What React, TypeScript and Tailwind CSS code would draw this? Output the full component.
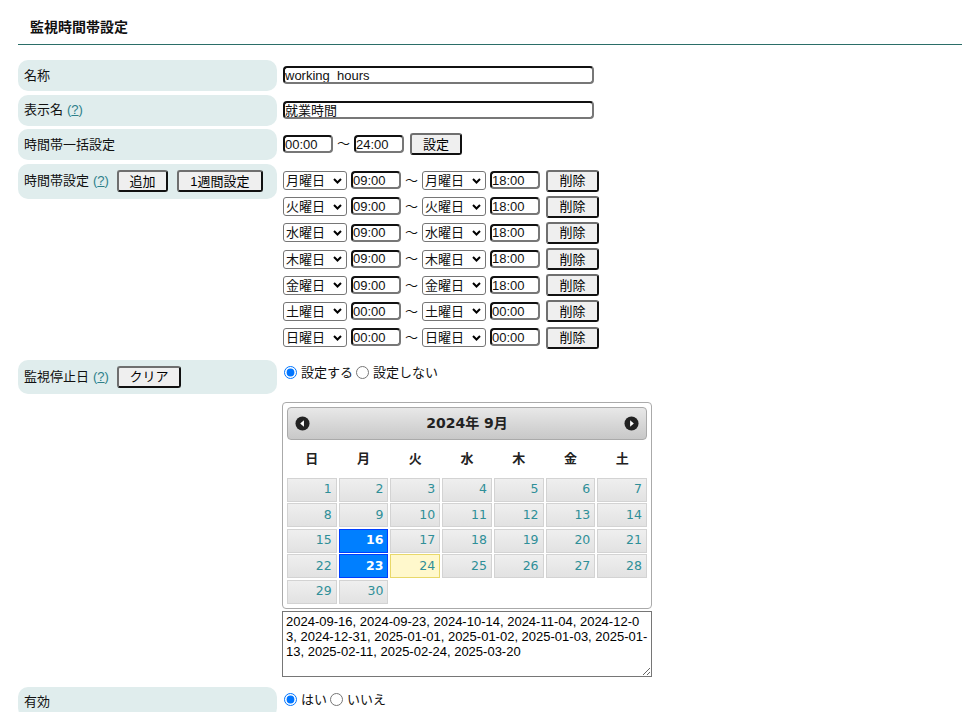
import React from 'react';

const FONT = "font-['Liberation_Sans','Noto_Sans_CJK_JP',sans-serif]";

const ranges = [
  { d: '月', from: '09:00', to: '18:00' },
  { d: '火', from: '09:00', to: '18:00' },
  { d: '水', from: '09:00', to: '18:00' },
  { d: '木', from: '09:00', to: '18:00' },
  { d: '金', from: '09:00', to: '18:00' },
  { d: '土', from: '00:00', to: '00:00' },
  { d: '日', from: '00:00', to: '00:00' },
];
const selectedDates = [16, 23];
const today = 24;
const stopDays =
  '2024-09-16, 2024-09-23, 2024-10-14, 2024-11-04, 2024-12-03, 2024-12-31, 2025-01-01, 2025-01-02, 2025-01-03, 2025-01-13, 2025-02-11, 2025-02-24, 2025-03-20';

const Help = () => (
  <span className="text-[#2d7f8a] ml-[4px]">
    (<span className="underline">?</span>)
  </span>
);

const Btn = ({ children, w }: { children: React.ReactNode; w: string }) => (
  <button
    className={`${w} h-[22px] shrink-0 bg-[#efefef] border-2 border-t-[#6f6f6f] border-l-[#6f6f6f] border-b-[#111] border-r-[#111] rounded-[3px] text-[13px] leading-none text-black flex items-center justify-center`}
  >
    {children}
  </button>
);

const TimeInput = ({ v }: { v: string }) => (
  <input
    readOnly
    value={v}
    className="w-[50px] h-[18px] shrink-0 border-2 border-t-[#111] border-l-[#111] border-r-[#777] border-b-[#777] rounded-[4px] px-0 text-[13px] leading-none bg-white outline-none"
  />
);

const DaySelect = ({ d }: { d: string }) => (
  <div className="w-[64px] h-[19px] shrink-0 border border-[#767676] rounded-[3px] bg-white flex items-center justify-between pl-[2px] pr-[4px] text-[13px] leading-none">
    <span>{d}曜日</span>
    <svg width="9" height="6" viewBox="0 0 9 6">
      <path d="M1 1l3.5 3.5L8 1" stroke="#000" strokeWidth="2" fill="none" />
    </svg>
  </div>
);

const Label = ({ children, h }: { children: React.ReactNode; h: string }) => (
  <div className={`w-[259px] shrink-0 ${h} bg-[#e0eded] rounded-[10px] pl-[6px] flex items-center text-[13px] text-[#111]`}>
    {children}
  </div>
);

const Radio = ({ checked, name, label }: { checked?: boolean; name: string; label: string }) => (
  <label className="flex items-center">
    <input type="radio" name={name} defaultChecked={checked} className="w-[13px] h-[13px] m-0 ml-[1px] mr-[4px]" />
    <span className="mr-[2px]">{label}</span>
  </label>
);

const CircleArrow = ({ dir }: { dir: 'l' | 'r' }) => (
  <svg width="15" height="15" viewBox="0 0 16 16">
    <circle cx="8" cy="8" r="7.5" fill="#222" />
    {dir === 'l' ? <path d="M9.5 4.5v7L5.5 8z" fill="#fff" /> : <path d="M6.5 4.5v7l4-3.5z" fill="#fff" />}
  </svg>
);

const Calendar = () => {
  const cells = Array.from({ length: 30 }, (_, i) => i + 1);
  return (
    <div className="w-[370px] border border-[#aaa] rounded-[4px] p-[4px] bg-white">
      <div className="h-[33px] border border-[#aaa] rounded-[4px] bg-gradient-to-b from-[#e8e8e8] to-[#c8c8c8] flex items-center justify-between px-[7px]">
        <CircleArrow dir="l" />
        <span className="font-['DejaVu_Sans','Noto_Sans_CJK_JP',sans-serif] font-bold text-[14px] text-[#222]">2024年 9月</span>
        <CircleArrow dir="r" />
      </div>
      <div className="grid grid-cols-7 gap-x-[2px] h-[38px] items-center">
        {['日', '月', '火', '水', '木', '金', '土'].map((d) => (
          <div key={d} className="text-center font-bold text-[13px] text-[#222]">{d}</div>
        ))}
      </div>
      <div className="grid grid-cols-7 gap-x-[2px] gap-y-[1.5px]">
        {cells.map((n) => {
          const sel = selectedDates.includes(n);
          const isToday = n === today;
          const cls = sel
            ? 'bg-[#007fff] border-[#003eff] text-white font-bold'
            : isToday
            ? 'bg-[#fff8cc] border-[#e8d86a] text-[#2f8f98]'
            : 'bg-gradient-to-b from-[#efefef] to-[#e2e2e2] border-[#d3d3d3] text-[#2f8f98]';
          return (
            <div
              key={n}
              className={`h-[24px] border ${cls} flex items-center justify-end pr-[4px] font-['DejaVu_Sans',sans-serif] text-[12.5px]`}
            >
              {n}
            </div>
          );
        })}
      </div>
    </div>
  );
};

export default function App() {
  return (
    <div className={`min-h-screen bg-white text-[#111] ${FONT}`}>
      {/* 見出し */}
      <div className="ml-[18px] border-b border-[#2b6e68] pl-[12px] pt-[18px] pb-[7px] text-[14px] font-bold leading-[19px]">
        監視時間帯設定
      </div>

      <div className="ml-[18px] mt-[15px]">
        {/* 名称 */}
        <div className="flex mb-[3.5px]">
          <Label h="h-[31px]">名称</Label>
          <div className="ml-[6px] h-[22px] flex items-center mt-[4px]">
            <input
              readOnly
              value="working_hours"
              className="w-[311px] h-[18px] border-2 border-t-[#111] border-l-[#111] border-r-[#777] border-b-[#777] rounded-[4px] px-0 text-[13px] leading-none outline-none"
            />
          </div>
        </div>

        {/* 表示名 */}
        <div className="flex mb-[3.5px]">
          <Label h="h-[31px]">
            表示名<Help />
          </Label>
          <div className="ml-[6px] h-[22px] flex items-center mt-[4px]">
            <input
              readOnly
              value="就業時間"
              className="w-[311px] h-[18px] border-2 border-t-[#111] border-l-[#111] border-r-[#777] border-b-[#777] rounded-[4px] px-0 text-[13px] leading-none outline-none"
            />
          </div>
        </div>

        {/* 時間帯一括設定 */}
        <div className="flex mb-[3.5px]">
          <Label h="h-[31px]">時間帯一括設定</Label>
          <div className="ml-[6px] h-[22px] flex items-center mt-[4px] text-[13px]">
            <TimeInput v="00:00" />
            <span className="mx-[4px]">～</span>
            <TimeInput v="24:00" />
            <div className="ml-[6px]">
              <Btn w="w-[52px]">設定</Btn>
            </div>
          </div>
        </div>

        {/* 時間帯設定 */}
        <div className="flex items-start mb-[11px]">
          <Label h="h-[35px]">
            時間帯設定<Help />
            <div className="ml-[8px] flex gap-[9px]">
              <Btn w="w-[51px]">追加</Btn>
              <Btn w="w-[86px]">1週間設定</Btn>
            </div>
          </Label>
          <div className="ml-[6px] pt-[6px] flex flex-col gap-[4.2px] text-[13px]">
            {ranges.map((r) => (
              <div key={r.d} className="h-[22px] flex items-center">
                <DaySelect d={r.d} />
                <div className="ml-[4px]">
                  <TimeInput v={r.from} />
                </div>
                <span className="mx-[4px]">～</span>
                <DaySelect d={r.d} />
                <div className="ml-[4px]">
                  <TimeInput v={r.to} />
                </div>
                <div className="ml-[6px]">
                  <Btn w="w-[53px]">削除</Btn>
                </div>
              </div>
            ))}
          </div>
        </div>

        {/* 監視停止日 */}
        <div className="flex items-start mb-[10px]">
          <Label h="h-[34px]">
            監視停止日<Help />
            <div className="ml-[8px]">
              <Btn w="w-[64px]">クリア</Btn>
            </div>
          </Label>
          <div className="ml-[5px] pt-[2px] text-[13px]">
            <div className="h-[22px] flex items-center pl-[1px]">
              <Radio name="stop" checked label="設定する" />
              <Radio name="stop" label="設定しない" />
            </div>
            <div className="mt-[18px]">
              <Calendar />
            </div>
            <textarea
              readOnly
              value={stopDays}
              className="block mt-[2px] w-[370px] h-[66px] border border-[#767676] px-[3px] pt-[2px] text-[13px] leading-[15px] break-all font-['Liberation_Sans',sans-serif] text-black outline-none resize"
            />
          </div>
        </div>

        {/* 有効 */}
        <div className="flex items-start">
          <Label h="h-[31px]">有効</Label>
          <div className="ml-[5px] pt-[2px] text-[13px]">
            <div className="h-[22px] flex items-center pl-[1px]">
              <Radio name="valid" checked label="はい" />
              <Radio name="valid" label="いいえ" />
            </div>
          </div>
        </div>
      </div>
    </div>
  );
}
